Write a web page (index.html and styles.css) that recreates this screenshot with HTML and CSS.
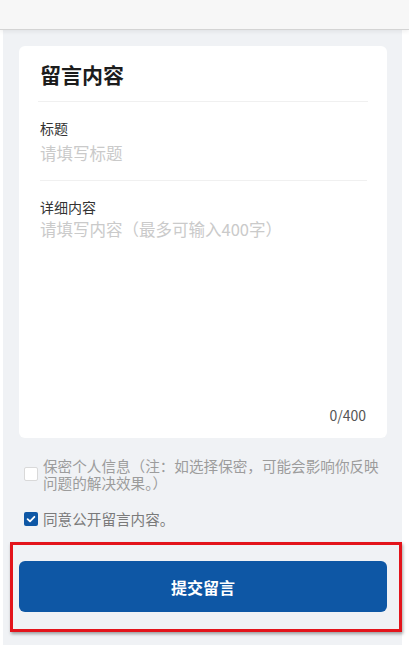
FILE: index.html
```html
<!DOCTYPE html>
<html lang="zh-CN">
<head>
<meta charset="utf-8">
<title>留言内容</title>
<link rel="stylesheet" href="styles.css">
</head>
<body>
<div class="topbar"></div>
<div class="main">
  <div class="card">
    <div class="card-title">留言内容</div>
    <div class="field field-first">
      <div class="label">标题</div>
      <div class="placeholder">请填写标题</div>
    </div>
    <div class="field field-body">
      <div class="label">详细内容</div>
      <div class="placeholder ph-body">请填写内容（最多可输入400字）</div>
      <div class="spacer"></div>
      <div class="counter">0/400</div>
    </div>
  </div>
  <div class="check-row row-private">
    <span class="box"></span>
    <span class="check-text text-light">保密个人信息（注：如选择保密，可能会影响你反映问题的解决效果。）</span>
  </div>
  <div class="check-row row-public">
    <span class="box box-checked">
      <svg viewBox="0 0 14 14" width="14" height="14"><path d="M3.6 7.2 L6 9.4 L10.4 4.8" fill="none" stroke="#fff" stroke-width="1.8" stroke-linecap="round" stroke-linejoin="round"/></svg>
    </span>
    <span class="check-text text-dark">同意公开留言内容。</span>
  </div>
  <div class="submit">提交留言</div>
</div>
<div class="highlight"></div>
</body>
</html>
```

FILE: styles.css
```css
html, body {
  margin: 0;
  padding: 0;
}
body {
  width: 409px;
  height: 645px;
  overflow: hidden;
  background: #ffffff;
  font-family: "Noto Sans CJK SC", "Noto Sans", sans-serif;
  position: relative;
}
.topbar {
  height: 29px;
  background: #f7f7f7;
  border-bottom: 1px solid #d4d4d4;
  box-shadow: 0 2px 4px rgba(0, 0, 0, 0.06);
  position: relative;
  z-index: 1;
}
.main {
  margin: 0 7px 0 3px;
  background: #f0f2f5;
  padding: 16px 15px 0 16px;
  height: 615px;
  box-sizing: border-box;
}
.card {
  background: #ffffff;
  border-radius: 6px;
  height: 392px;
  box-sizing: border-box;
  padding: 14px 19px 0 19px;
  display: flex;
  flex-direction: column;
}
.card-title {
  font-size: 21px;
  font-weight: 700;
  line-height: 29px;
  color: #1c1c1c;
  padding: 0 0 12px 2px;
  border-bottom: 1px solid #f0f0f0;
}
.field {
  margin: 0 1px 0 2px;
}
.field-first {
  padding: 16px 0 16px;
  border-bottom: 1px solid #f0f0f0;
}
.field-body {
  flex: 1;
  display: flex;
  flex-direction: column;
  padding-top: 16px;
}
.label {
  font-size: 14px;
  line-height: 20px;
  color: #333333;
}
.placeholder {
  font-size: 16.5px;
  line-height: 22px;
  color: #cacaca;
  margin-top: 4px;
}
.ph-body {
  margin-top: 1px;
}
.spacer {
  flex: 1;
}
.counter {
  text-align: right;
  font-size: 14px;
  line-height: 20px;
  color: #555555;
  padding: 0 1px 13px 0;
}
.check-row {
  display: flex;
  align-items: center;
  gap: 5px;
  padding-left: 5px;
}
.row-private {
  margin-top: 19px;
}
.row-public {
  margin-top: 19px;
}
.box {
  flex: none;
  width: 14px;
  height: 14px;
  box-sizing: border-box;
  border: 1px solid #d9d9d9;
  border-radius: 2px;
  background: #ffffff;
  display: flex;
}
.box-checked {
  border: none;
  background: #0e57a5;
}
.check-text {
  font-size: 14.6px;
  line-height: 17px;
}
.text-light {
  color: #9c9c9c;
}
.text-dark {
  color: #7a7a7a;
}
.submit {
  margin-top: 34px;
  height: 51px;
  border-radius: 6px;
  background: #0e57a5;
  color: #ffffff;
  font-size: 16px;
  font-weight: 700;
  display: flex;
  align-items: center;
  justify-content: center;
}
.highlight {
  position: absolute;
  left: 10px;
  top: 542px;
  width: 392px;
  height: 90px;
  box-sizing: border-box;
  border: 3px solid #e3141b;
  box-shadow: 1px 2px 3px rgba(0, 0, 0, 0.35);
}
```
